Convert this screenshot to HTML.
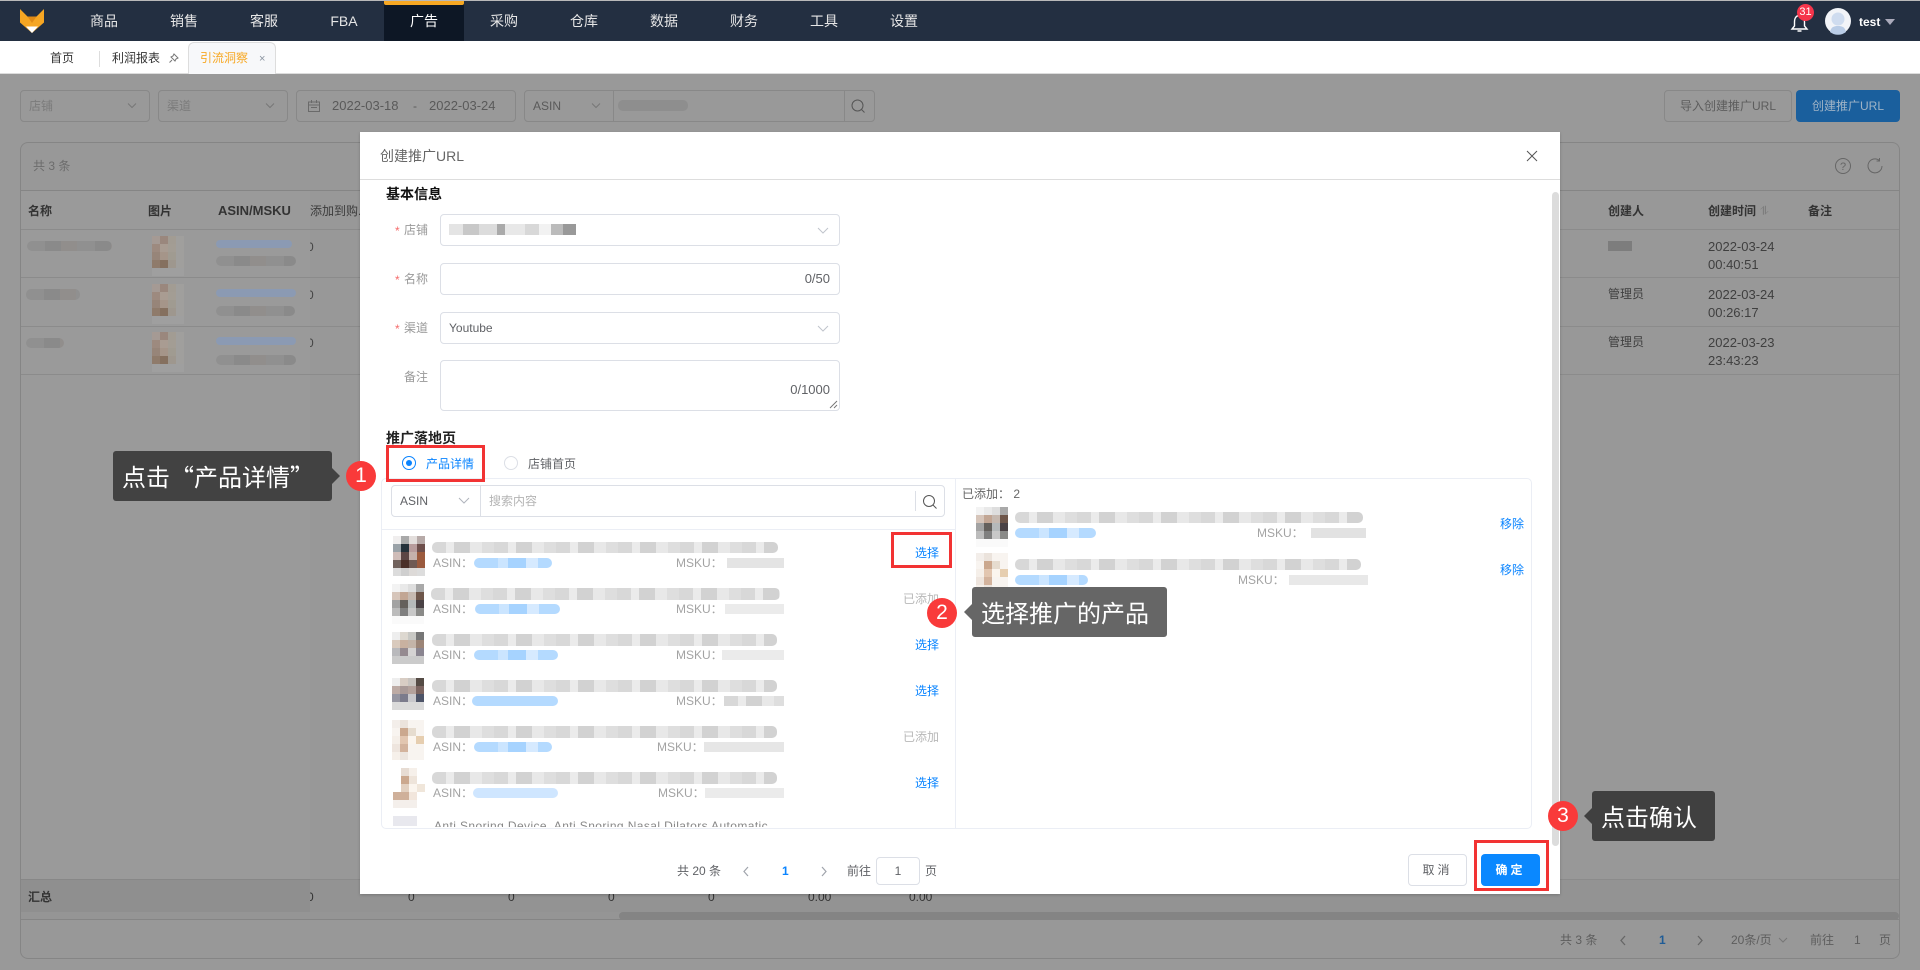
<!DOCTYPE html>
<html lang="zh-CN"><head><meta charset="utf-8"><title>创建推广URL</title>
<style>
*{box-sizing:border-box}
html,body{margin:0;padding:0;width:1920px;height:970px;overflow:hidden;background:#999;font:12px/16px "Liberation Sans","Noto Sans CJK SC",sans-serif;color:#666}
.a{position:absolute}
.t{position:absolute;white-space:nowrap;line-height:16px}
.b{font-weight:700}
.d{font-size:13px}
.nav{left:0;top:0;width:1920px;height:41px;background:#232f41;border-top:1px solid #b9b9b9}
.ni{position:absolute;top:13px;width:80px;text-align:center;font-size:14px;line-height:16px;color:#e6e6e6}
.bx{position:absolute;border:1px solid #888;border-radius:4px}
.in{position:absolute;border:1px solid #dcdfe6;border-radius:4px;background:#fff}
.red{position:absolute;border:3px solid #f23333;z-index:5}
.bl{position:absolute;height:11px;border-radius:5px;background:repeating-linear-gradient(90deg,#d8d8d8 0 14px,#ebebeb 14px 22px,#d2d2d2 22px 38px,#e8e8e8 38px 50px,#dedede 50px 62px)}
.bb{position:absolute;height:10px;border-radius:5px;background:repeating-linear-gradient(90deg,#b4daff 0 24px,#cbe5ff 24px 34px,#a6d3ff 34px 52px,#d6eaff 52px 64px)}
.dk{position:absolute;height:10px;border-radius:5px;background:repeating-linear-gradient(90deg,#909090 0 18px,#8a8a8a 18px 34px,#918e8c 34px 50px)}
.tip{position:absolute;border-radius:3px;color:#fff;font-family:"Noto Sans CJK SC","Liberation Sans",sans-serif;font-size:24px;line-height:50px;height:50px;white-space:nowrap;z-index:6}
.arrow{position:absolute;width:0;height:0;border:8px solid transparent;z-index:6}
.num{position:absolute;width:30px;height:30px;border-radius:50%;background:#f93a3a;color:#fff;text-align:center;font-size:21px;line-height:30px;z-index:7}
.blue{color:#0a84ff}.lab{color:#999}.as{color:#a3a3a3}
.star{color:#f56c6c}
.hd{color:#333;font-weight:700}
.z{position:absolute;left:310px;width:6px;height:16px;overflow:hidden;line-height:16px;text-indent:-3px}
svg{position:absolute;overflow:visible}
</style></head><body>
<svg width="0" height="0" style="left:0;top:0"><defs>
<symbol id="m1" viewBox="0 0 32 40" shape-rendering="crispEdges"><rect width="8" height="8" fill="#f0eeee"/><rect x="8" width="8" height="8" fill="#a9a9a9"/><rect x="16" width="8" height="8" fill="#e3dedc"/><rect x="24" width="8" height="8" fill="#b7aaa8"/><rect y="8" width="8" height="8" fill="#9aa2a8"/><rect x="8" y="8" width="8" height="8" fill="#25313a"/><rect x="16" y="8" width="8" height="8" fill="#b89c9c"/><rect x="24" y="8" width="8" height="8" fill="#6e4f4c"/><rect y="16" width="8" height="8" fill="#cfbcb8"/><rect x="8" y="16" width="8" height="8" fill="#5c4544"/><rect x="16" y="16" width="8" height="8" fill="#c5b1ab"/><rect x="24" y="16" width="8" height="8" fill="#9c5b3e"/><rect y="24" width="8" height="8" fill="#71625d"/><rect x="8" y="24" width="8" height="8" fill="#4a3029"/><rect x="16" y="24" width="8" height="8" fill="#6f5a54"/><rect x="24" y="24" width="8" height="8" fill="#9a5a3e"/><rect y="32" width="8" height="8" fill="#dcdcdc"/><rect x="8" y="32" width="8" height="8" fill="#cfcfcf"/><rect x="16" y="32" width="8" height="8" fill="#dddad8"/><rect x="24" y="32" width="8" height="8" fill="#ddd"/></symbol>
<symbol id="m2" viewBox="0 0 32 40" shape-rendering="crispEdges"><rect width="8" height="8" fill="#f3f3f3"/><rect x="8" width="8" height="8" fill="#e9e9e9"/><rect x="16" width="8" height="8" fill="#dedede"/><rect x="24" width="8" height="8" fill="#a9a9a9"/><rect y="8" width="8" height="8" fill="#d6c5ba"/><rect x="8" y="8" width="8" height="8" fill="#c2a694"/><rect x="16" y="8" width="8" height="8" fill="#c6b9b0"/><rect x="24" y="8" width="8" height="8" fill="#6e564a"/><rect y="16" width="8" height="8" fill="#a3a3a3"/><rect x="8" y="16" width="8" height="8" fill="#64605c"/><rect x="16" y="16" width="8" height="8" fill="#b5b9ba"/><rect x="24" y="16" width="8" height="8" fill="#4a4245"/><rect y="24" width="8" height="8" fill="#bcbcbc"/><rect x="8" y="24" width="8" height="8" fill="#7f7f7f"/><rect x="16" y="24" width="8" height="8" fill="#c8c8c8"/><rect x="24" y="24" width="8" height="8" fill="#8a8a88"/><rect y="32" width="32" height="8" fill="#fafafa"/></symbol>
<symbol id="m3" viewBox="0 0 32 40" shape-rendering="crispEdges"><rect width="8" height="8" fill="#eee"/><rect x="8" width="8" height="8" fill="#ddd8d0"/><rect x="16" width="8" height="8" fill="#c8c8c4"/><rect x="24" width="8" height="8" fill="#777"/><rect y="8" width="8" height="8" fill="#d9cabd"/><rect x="8" y="8" width="8" height="8" fill="#c9b1a0"/><rect x="16" y="8" width="8" height="8" fill="#c4b4a8"/><rect x="24" y="8" width="8" height="8" fill="#9c8577"/><rect y="16" width="8" height="8" fill="#b9b9bc"/><rect x="8" y="16" width="8" height="8" fill="#958a90"/><rect x="16" y="16" width="8" height="8" fill="#d5d3d3"/><rect x="24" y="16" width="8" height="8" fill="#8a8590"/><rect y="24" width="32" height="8" fill="#cbcbcb"/><rect y="32" width="32" height="8" fill="#fff"/></symbol>
<symbol id="m4" viewBox="0 0 32 40" shape-rendering="crispEdges"><rect width="8" height="8" fill="#eee"/><rect x="8" width="8" height="8" fill="#d8cdc4"/><rect x="16" width="8" height="8" fill="#c8c4c0"/><rect x="24" width="8" height="8" fill="#554b45"/><rect y="8" width="8" height="8" fill="#bdaba5"/><rect x="8" y="8" width="8" height="8" fill="#a89997"/><rect x="16" y="8" width="8" height="8" fill="#b4a29c"/><rect x="24" y="8" width="8" height="8" fill="#7b6460"/><rect y="16" width="8" height="8" fill="#9696a2"/><rect x="8" y="16" width="8" height="8" fill="#7b7b8c"/><rect x="16" y="16" width="8" height="8" fill="#c8c8cc"/><rect x="24" y="16" width="8" height="8" fill="#4d5468"/><rect y="24" width="32" height="8" fill="#dadada"/><rect y="32" width="32" height="8" fill="#fff"/></symbol>
<symbol id="m5" viewBox="0 0 32 40" shape-rendering="crispEdges"><rect width="32" height="40" fill="#f8f4f0"/><rect width="8" height="8" fill="#f3eeea"/><rect x="8" width="8" height="8" fill="#ebe3dc"/><rect x="8" y="8" width="8" height="8" fill="#cba88e"/><rect x="16" y="8" width="8" height="8" fill="#e6dccf"/><rect y="16" width="8" height="8" fill="#f5efe9"/><rect x="8" y="16" width="8" height="8" fill="#e2c6b0"/><rect x="16" y="16" width="8" height="8" fill="#fbf5ee"/><rect x="24" y="16" width="8" height="8" fill="#e6ceb0"/><rect y="24" width="8" height="8" fill="#eee5de"/><rect x="8" y="24" width="8" height="8" fill="#d3b39d"/><rect y="32" width="8" height="8" fill="#f6f0ea"/><rect x="8" y="32" width="8" height="8" fill="#ece5df"/></symbol>
<symbol id="m6" viewBox="0 0 32 40" shape-rendering="crispEdges"><rect x="8" width="8" height="8" fill="#e7dcd3"/><rect x="16" width="8" height="8" fill="#f6f0ea"/><rect x="8" y="8" width="8" height="8" fill="#cba88e"/><rect x="16" y="8" width="8" height="8" fill="#eee4da"/><rect x="8" y="16" width="8" height="8" fill="#e2d0c0"/><rect x="16" y="16" width="8" height="8" fill="#fbf5ee"/><rect x="24" y="16" width="8" height="8" fill="#f0e6da"/><rect y="24" width="16" height="8" fill="#cfb09a"/><rect x="16" y="24" width="8" height="8" fill="#f2e6dc"/><rect y="32" width="24" height="8" fill="#f4efeb"/></symbol>
<symbol id="m7" viewBox="0 0 32 40" shape-rendering="crispEdges"><rect width="32" height="40" fill="#a09f9d"/><rect width="8" height="8" fill="#a59a94"/><rect x="8" width="8" height="8" fill="#9a877d"/><rect x="16" width="8" height="8" fill="#a29c93"/><rect y="8" width="8" height="8" fill="#9d8a7f"/><rect x="8" y="8" width="8" height="8" fill="#a99c92"/><rect x="16" y="8" width="8" height="8" fill="#a39d94"/><rect y="16" width="8" height="8" fill="#978579"/><rect x="8" y="16" width="8" height="8" fill="#a59589"/><rect x="16" y="16" width="8" height="8" fill="#a09b91"/><rect y="24" width="8" height="8" fill="#8f7b6b"/><rect x="8" y="24" width="8" height="8" fill="#85705f"/><rect x="16" y="24" width="8" height="8" fill="#9e978e"/><rect y="32" width="32" height="8" fill="#9f9f9f"/></symbol>
</defs></svg>

<!-- background page -->
<div class="a" style="left:0;top:73px;width:1920px;height:897px;background:#999"></div>
<div class="bx" style="left:20px;top:90px;width:130px;height:32px"></div><div class="t" style="left:29px;top:98px;color:#7b7b7b">店铺</div>
<svg style="left:127px;top:102px" width="10" height="8"><path d="M1 1.5l4 4 4-4" fill="none" stroke="#777"/></svg>
<div class="bx" style="left:158px;top:90px;width:130px;height:32px"></div><div class="t" style="left:167px;top:98px;color:#7b7b7b">渠道</div>
<svg style="left:265px;top:102px" width="10" height="8"><path d="M1 1.5l4 4 4-4" fill="none" stroke="#777"/></svg>
<div class="bx" style="left:296px;top:90px;width:220px;height:32px"></div>
<svg style="left:308px;top:100px" width="12" height="12"><path d="M.5 2h11v9.5H.5zM.5 5h11M3.5 0v3M8.5 0v3M3 7.500h6" fill="none" stroke="#6a6a6a"/></svg>
<div class="t d" style="left:332px;top:98px;color:#5a5a5a">2022-03-18</div><div class="t" style="left:413px;top:98px;color:#5a5a5a">-</div><div class="t d" style="left:429px;top:98px;color:#5a5a5a">2022-03-24</div>
<div class="bx" style="left:524px;top:90px;width:351px;height:32px"></div>
<div class="a" style="left:613px;top:90px;width:1px;height:32px;background:#888"></div><div class="a" style="left:844px;top:90px;width:1px;height:32px;background:#888"></div>
<div class="t" style="left:533px;top:98px;color:#5a5a5a">ASIN</div>
<svg style="left:591px;top:102px" width="10" height="8"><path d="M1 1.5l4 4 4-4" fill="none" stroke="#777"/></svg>
<div class="dk" style="left:618px;top:100px;width:70px;height:11px;background:#8e8e8e"></div>
<svg style="left:851px;top:99px" width="15" height="15"><circle cx="6.5" cy="6.5" r="5.5" fill="none" stroke="#555"/><path d="M10.5 10.5l3 3" stroke="#555"/></svg>
<div class="bx" style="left:1664px;top:90px;width:128px;height:32px"></div><div class="t" style="left:1680px;top:98px;color:#5d5d5d">导入创建推广URL</div>
<div class="a" style="left:1796px;top:90px;width:104px;height:32px;background:#1a5f9d;border-radius:4px"></div><div class="t" style="left:1812px;top:98px;color:#9fb3c6">创建推广URL</div>

<div class="bx" style="left:20px;top:142px;width:1880px;height:817px;border-radius:8px;background:#989898;border-color:#858585"></div>
<div class="t" style="left:33px;top:158px;color:#6c6c6c">共 3 条</div>
<svg style="left:1835px;top:158px" width="16" height="16"><circle cx="8" cy="8" r="7.500" fill="none" stroke="#666"/><text x="8" y="12" font-size="11" text-anchor="middle" fill="#666" font-family="Liberation Sans">?</text></svg>
<svg style="left:1867px;top:158px" width="16" height="16"><path d="M12.500 2.500A7 7 0 1 0 15 8M12.500 0v3h-3" fill="none" stroke="#666"/></svg>
<div class="a" style="left:21px;top:190px;width:1878px;height:1px;background:#858585"></div>
<div class="a" style="left:21px;top:229px;width:1878px;height:1px;background:#8b8b8b"></div>
<div class="a" style="left:21px;top:277px;width:1878px;height:1px;background:#8b8b8b"></div>
<div class="a" style="left:21px;top:326px;width:1878px;height:1px;background:#8b8b8b"></div>
<div class="a" style="left:21px;top:374px;width:1878px;height:1px;background:#8b8b8b"></div>
<div class="a" style="left:21px;top:191px;width:289px;height:721px;background:#9a9a9a"></div>
<div class="a" style="left:21px;top:229px;width:289px;height:1px;background:#8b8b8b"></div>
<div class="a" style="left:21px;top:277px;width:289px;height:1px;background:#8b8b8b"></div>
<div class="a" style="left:21px;top:326px;width:289px;height:1px;background:#8b8b8b"></div>
<div class="a" style="left:21px;top:374px;width:289px;height:1px;background:#8b8b8b"></div>
<div class="t hd" style="left:28px;top:203px">名称</div><div class="t hd" style="left:148px;top:203px">图片</div><div class="t hd d" style="left:218px;top:203px">ASIN/MSKU</div><div class="t" style="left:310px;top:203px;color:#3c3c3c">添加到购...</div>
<div class="t hd" style="left:1608px;top:203px">创建人</div><div class="t hd" style="left:1708px;top:203px">创建时间</div><div class="t" style="left:1760px;top:203px;color:#7b7b7b">⥮</div><div class="t hd" style="left:1808px;top:203px">备注</div>
<div class="dk" style="left:27px;top:241px;width:85px"></div><div class="dk" style="left:26px;top:289px;width:54px;height:11px"></div><div class="dk" style="left:26px;top:338px;width:38px"></div>
<svg style="left:152px;top:236px" width="32" height="40"><use href="#m7"/></svg><svg style="left:152px;top:284px" width="32" height="40"><use href="#m7"/></svg><svg style="left:152px;top:332px" width="32" height="40"><use href="#m7"/></svg>
<div class="a" style="left:216px;top:240px;width:76px;height:8px;border-radius:4px;background:#8b9ab3"></div><div class="dk" style="left:216px;top:256px;width:80px"></div>
<div class="a" style="left:216px;top:289px;width:80px;height:8px;border-radius:4px;background:#8b9ab3"></div><div class="dk" style="left:216px;top:306px;width:79px"></div>
<div class="a" style="left:216px;top:337px;width:80px;height:8px;border-radius:4px;background:#8b9ab3"></div><div class="dk" style="left:216px;top:355px;width:80px"></div>
<div class="z" style="top:239px;color:#444">0</div><div class="z" style="top:287px;color:#444">0</div><div class="z" style="top:335px;color:#444">0</div>
<div class="a" style="left:1608px;top:241px;width:24px;height:10px;background:#7d7d7d"></div>
<div class="t" style="left:1608px;top:286px;color:#3f3f3f">管理员</div><div class="t" style="left:1608px;top:334px;color:#3f3f3f">管理员</div>
<div class="t d" style="left:1708px;top:239px;color:#3f3f3f">2022-03-24</div><div class="t d" style="left:1708px;top:257px;color:#3f3f3f">00:40:51</div>
<div class="t d" style="left:1708px;top:287px;color:#3f3f3f">2022-03-24</div><div class="t d" style="left:1708px;top:305px;color:#3f3f3f">00:26:17</div>
<div class="t d" style="left:1708px;top:335px;color:#3f3f3f">2022-03-23</div><div class="t d" style="left:1708px;top:353px;color:#3f3f3f">23:43:23</div>
<!-- summary -->
<div class="a" style="left:21px;top:879px;width:1878px;height:33px;background:#939393;border-top:1px solid #8b8b8b"></div>
<div class="a" style="left:21px;top:879px;width:289px;height:33px;background:#8f8f8f;border-top:1px solid #878787"></div>
<div class="a" style="left:21px;top:912px;width:1878px;height:8px;background:#959595;border-bottom:1px solid #858585"></div>
<div class="a" style="left:619px;top:912px;width:1280px;height:8px;background:#848484;border-radius:4px"></div>
<div class="t" style="left:28px;top:889px;color:#333;font-weight:700">汇总</div>
<div class="z" style="top:889px;color:#333">0</div><div class="t" style="left:408px;top:889px;color:#333">0</div><div class="t" style="left:508px;top:889px;color:#333">0</div><div class="t" style="left:608px;top:889px;color:#333">0</div><div class="t" style="left:708px;top:889px;color:#333">0</div><div class="t" style="left:808px;top:889px;color:#333">0.00</div><div class="t" style="left:909px;top:889px;color:#333">0.00</div>
<!-- page pagination -->
<div class="t" style="left:1560px;top:932px;color:#5e5e5e">共 3 条</div>
<svg style="left:1619px;top:935px" width="8" height="11"><path d="M6 1L2 5.500l4 4.500" fill="none" stroke="#666" stroke-width="1.300"/></svg>
<div class="t b" style="left:1659px;top:932px;color:#1f5c96">1</div>
<svg style="left:1696px;top:935px" width="8" height="11"><path d="M2 1l4 4.500L2 10" fill="none" stroke="#666" stroke-width="1.300"/></svg>
<div class="t" style="left:1731px;top:932px;color:#5e5e5e">20条/页</div>
<svg style="left:1778px;top:937px" width="10" height="7"><path d="M1 1l4 4 4-4" fill="none" stroke="#777"/></svg>
<div class="t" style="left:1810px;top:932px;color:#5e5e5e">前往</div><div class="t" style="left:1854px;top:932px;color:#5e5e5e">1</div><div class="t" style="left:1879px;top:932px;color:#5e5e5e">页</div>

<!-- top nav -->
<div class="a nav"></div>
<svg style="left:20px;top:9px" width="24" height="24"><path d="M0 0l7.500 7.500h9L24 0v13.500L12 24 0 13.500z" fill="#f6a623"/><path d="M6 17.500h12L12 24z" fill="#fff"/><path d="M7.500 7.500h9L12 14z" fill="#e08a15"/></svg>
<div class="a" style="left:384px;top:1px;width:80px;height:40px;background:#0d1725"></div><div class="a" style="left:384px;top:1px;width:80px;height:4px;background:#f7a823;border-radius:0 0 2px 2px"></div>
<div class="ni" style="left:64px">商品</div><div class="ni" style="left:144px">销售</div><div class="ni" style="left:224px">客服</div><div class="ni" style="left:304px">FBA</div><div class="ni" style="left:384px;color:#fff">广告</div><div class="ni" style="left:464px">采购</div><div class="ni" style="left:544px">仓库</div><div class="ni" style="left:624px">数据</div><div class="ni" style="left:704px">财务</div><div class="ni" style="left:784px">工具</div><div class="ni" style="left:864px">设置</div>
<svg style="left:1791px;top:14px" width="17" height="19"><path d="M8.500 1.500C5 1.500 3.500 4.500 3.500 8v4L1 15h15l-2.500-3V8c0-3.500-1.500-6.500-5-6.500zM6.500 17h4" fill="none" stroke="#fff" stroke-width="1.400"/></svg>
<div class="a" style="left:1797px;top:4px;width:17px;height:17px;border-radius:50%;background:#f5354b;color:#fff;font-size:11px;line-height:17px;text-align:center">31</div>
<svg style="left:1825px;top:8px" width="26" height="26"><circle cx="13" cy="13" r="13" fill="#f2f4f8"/><circle cx="13" cy="11" r="6.500" fill="#cfdcef"/><path d="M5 24c1-5 4-6 8-6s7 1 8 6a13 13 0 0 1-16 0z" fill="#b9cce6"/></svg>
<div class="t b" style="left:1859px;top:14px;color:#fff">test</div>
<div class="a" style="left:1885px;top:19px;width:0;height:0;border:5px solid transparent;border-top:6px solid #aab;border-bottom:0"></div>

<!-- tabs -->
<div class="a" style="left:0;top:41px;width:1920px;height:33px;background:#fff;border-bottom:1px solid #dcdcdc"></div>
<div class="t" style="left:50px;top:50px;color:#333">首页</div>
<div class="a" style="left:99px;top:51px;width:1px;height:16px;background:#ddd"></div>
<div class="t" style="left:112px;top:50px;color:#333">利润报表</div>
<svg style="left:169px;top:53px" width="10" height="11"><path d="M5 1l4 4-2 1-1 2-4-4 2-1zM3 7L.500 9.500" fill="none" stroke="#777"/></svg>
<div class="a" style="left:188px;top:42px;width:88px;height:32px;background:#f7f8fa;border:1px solid #ddd;border-bottom:0;border-radius:6px 6px 0 0"></div>
<div class="t" style="left:200px;top:50px;color:#f7a823">引流洞察</div>
<div class="t" style="left:259px;top:51px;color:#8a93a0;font-size:11px">×</div>

<!-- modal -->
<div class="a" style="left:360px;top:132px;width:1200px;height:762px;background:#fff;box-shadow:0 1px 3px rgba(0,0,0,.2)"></div>
<div class="t" style="left:380px;top:148px;font-size:14px;color:#666">创建推广URL</div>
<svg style="left:1527px;top:151px" width="10" height="10"><path d="M0 0l10 10M10 0L0 10" stroke="#555" fill="none"/></svg>
<div class="a" style="left:360px;top:179px;width:1200px;height:1px;background:#ddd"></div>
<div class="a" style="left:1552px;top:192px;width:7px;height:654px;background:#dcdcdc;border-radius:4px"></div>

<div class="t b" style="left:386px;top:186px;font-size:14px;color:#111">基本信息</div>
<div class="t star" style="left:395px;top:223px">*</div><div class="t lab" style="left:404px;top:222px">店铺</div>
<div class="in" style="left:440px;top:214px;width:400px;height:32px"></div>
<div class="a" style="left:449px;top:224px;width:127px;height:11px;background:repeating-linear-gradient(90deg,#e4e4e4 0 14px,#c8c8c8 14px 30px,#dcdcdc 30px 48px,#aaa 48px 56px,#e8e8e8 56px 76px,#d8d8d8 76px 90px,#f2f2f2 90px 102px,#bbb 102px 114px,#999 114px 127px)"></div>
<svg style="left:817px;top:227px" width="12" height="8"><path d="M1 1l5 5 5-5" fill="none" stroke="#c0c4cc"/></svg>
<div class="t star" style="left:395px;top:272px">*</div><div class="t lab" style="left:404px;top:271px">名称</div>
<div class="in" style="left:440px;top:263px;width:400px;height:32px"></div><div class="t d" style="right:1090px;top:271px;color:#606266">0/50</div>
<div class="t star" style="left:395px;top:321px">*</div><div class="t lab" style="left:404px;top:320px">渠道</div>
<div class="in" style="left:440px;top:312px;width:400px;height:32px"></div><div class="t" style="left:449px;top:320px;color:#606266">Youtube</div>
<svg style="left:817px;top:325px" width="12" height="8"><path d="M1 1l5 5 5-5" fill="none" stroke="#c0c4cc"/></svg>
<div class="t lab" style="left:404px;top:369px">备注</div>
<div class="in" style="left:440px;top:360px;width:400px;height:51px"></div><div class="t d" style="right:1090px;top:382px;color:#606266">0/1000</div>
<svg style="left:829px;top:400px" width="10" height="10"><path d="M1 8l7-7M5 8l3-3" stroke="#777" fill="none"/></svg>

<div class="t b" style="left:386px;top:430px;font-size:14px;color:#222">推广落地页</div>
<svg style="left:401px;top:455px" width="16" height="16"><circle cx="8" cy="8" r="6.500" fill="#fff" stroke="#0a84ff"/><circle cx="8" cy="8" r="3" fill="#0a84ff"/></svg>
<div class="t blue" style="left:426px;top:456px">产品详情</div>
<svg style="left:503px;top:455px" width="16" height="16"><circle cx="8" cy="8" r="6.500" fill="#fff" stroke="#dcdfe6"/></svg>
<div class="t" style="left:528px;top:456px;color:#606266">店铺首页</div>
<div class="red" style="left:386px;top:445px;width:99px;height:37px"></div>

<div class="a" style="left:381px;top:478px;width:1151px;height:351px;border:1px solid #ebeef5;border-radius:5px"></div>
<div class="a" style="left:955px;top:479px;width:1px;height:349px;background:#ebeef5"></div>
<div class="a" style="left:382px;top:529px;width:573px;height:1px;background:#ebeef5"></div>
<div class="in" style="left:391px;top:485px;width:554px;height:32px"></div>
<div class="a" style="left:480px;top:485px;width:1px;height:32px;background:#dcdfe6"></div><div class="a" style="left:915px;top:491px;width:1px;height:20px;background:#dcdfe6"></div>
<div class="t" style="left:400px;top:493px;color:#606266">ASIN</div>
<svg style="left:458px;top:497px" width="12" height="8"><path d="M1 1l5 5 5-5" fill="none" stroke="#b0b4bc"/></svg>
<div class="t" style="left:489px;top:493px;color:#b4b4b4">搜索内容</div>
<svg style="left:922px;top:494px" width="16" height="16"><circle cx="7" cy="7" r="5.500" fill="none" stroke="#555"/><path d="M11 11l3.500 3.500" stroke="#555"/></svg>

<!-- left list -->
<svg style="left:393px;top:536px" width="32" height="40"><use href="#m1"/></svg>
<div class="bl" style="left:432px;top:542px;width:346px"></div><div class="t as" style="left:433px;top:555px">ASIN：</div><div class="bb" style="left:474px;top:558px;width:78px"></div><div class="t as" style="left:676px;top:555px">MSKU：</div><div class="bl" style="left:727px;top:558px;width:57px;height:10px;background:#e4e4e4;border-radius:0"></div><div class="t blue" style="left:915px;top:545px">选择</div>
<svg style="left:392px;top:584px" width="32" height="40"><use href="#m2"/></svg>
<div class="bl" style="left:431px;top:588px;width:349px;height:12px"></div><div class="t as" style="left:433px;top:601px">ASIN：</div><div class="bb" style="left:475px;top:604px;width:85px"></div><div class="t as" style="left:676px;top:601px">MSKU：</div><div class="bl" style="left:725px;top:604px;width:59px;height:10px;background:#ebebeb;border-radius:0"></div><div class="t" style="left:903px;top:591px;color:#b8b8b8">已添加</div>
<svg style="left:392px;top:632px" width="32" height="40"><use href="#m3"/></svg>
<div class="bl" style="left:432px;top:634px;width:345px;height:12px"></div><div class="t as" style="left:433px;top:647px">ASIN：</div><div class="bb" style="left:474px;top:650px;width:84px"></div><div class="t as" style="left:676px;top:647px">MSKU：</div><div class="bl" style="left:722px;top:650px;width:62px;height:10px;background:#ebebeb;border-radius:0"></div><div class="t blue" style="left:915px;top:637px">选择</div>
<svg style="left:392px;top:678px" width="32" height="40"><use href="#m4"/></svg>
<div class="bl" style="left:432px;top:680px;width:345px;height:12px"></div><div class="t as" style="left:433px;top:693px">ASIN：</div><div class="bb" style="left:472px;top:696px;width:86px;background:#b4daff"></div><div class="t as" style="left:676px;top:693px">MSKU：</div><div class="bl" style="left:724px;top:696px;width:60px;height:10px;border-radius:0"></div><div class="t blue" style="left:915px;top:683px">选择</div>
<svg style="left:392px;top:720px" width="32" height="40"><use href="#m5"/></svg>
<div class="bl" style="left:432px;top:726px;width:345px;height:12px"></div><div class="t as" style="left:433px;top:739px">ASIN：</div><div class="bb" style="left:474px;top:742px;width:78px"></div><div class="t as" style="left:657px;top:739px">MSKU：</div><div class="bl" style="left:704px;top:742px;width:80px;height:10px;background:#e6e6e6;border-radius:0"></div><div class="t" style="left:903px;top:729px;color:#b8b8b8">已添加</div>
<svg style="left:393px;top:768px" width="32" height="40"><use href="#m6"/></svg>
<div class="bl" style="left:432px;top:772px;width:345px;height:12px"></div><div class="t as" style="left:433px;top:785px">ASIN：</div><div class="bb" style="left:473px;top:788px;width:85px;background:#cfe6ff"></div><div class="t as" style="left:658px;top:785px">MSKU：</div><div class="bl" style="left:705px;top:788px;width:79px;height:10px;background:#ebebeb;border-radius:0"></div><div class="t blue" style="left:915px;top:775px">选择</div>
<div class="a" style="left:393px;top:816px;width:24px;height:10px;background:#e8e8ee"></div>
<div class="a" style="left:434px;top:819px;width:345px;height:8px;overflow:hidden;color:#888;line-height:14px;letter-spacing:.4px;white-space:nowrap">Anti Snoring Device, Anti Snoring Nasal Dilators Automatic</div>
<div class="red" style="left:891px;top:532px;width:61px;height:36px"></div>

<!-- right list -->
<div class="t" style="left:962px;top:486px;color:#666">已添加： 2</div>
<svg style="left:976px;top:507px" width="32" height="40"><use href="#m2"/></svg>
<div class="bl" style="left:1015px;top:512px;width:348px"></div><div class="bb" style="left:1015px;top:528px;width:81px"></div><div class="t as" style="left:1257px;top:525px">MSKU：</div><div class="bl" style="left:1311px;top:528px;width:55px;height:10px;background:#e2e2e2;border-radius:0"></div><div class="t blue" style="left:1500px;top:516px">移除</div>
<svg style="left:976px;top:553px" width="32" height="40"><use href="#m5"/></svg>
<div class="bl" style="left:1015px;top:559px;width:346px"></div><div class="bb" style="left:1015px;top:575px;width:73px"></div><div class="t as" style="left:1238px;top:572px">MSKU：</div><div class="bl" style="left:1289px;top:575px;width:79px;height:10px;background:#e8e8e8;border-radius:0"></div><div class="t blue" style="left:1500px;top:562px">移除</div>

<!-- modal pagination -->
<div class="t" style="left:677px;top:863px;color:#606266">共 20 条</div>
<svg style="left:742px;top:866px" width="8" height="11"><path d="M6 1L2 5.500l4 4.500" fill="none" stroke="#a0a4ac" stroke-width="1.200"/></svg>
<div class="t b blue" style="left:782px;top:863px">1</div>
<svg style="left:820px;top:866px" width="8" height="11"><path d="M2 1l4 4.500L2 10" fill="none" stroke="#a0a4ac" stroke-width="1.200"/></svg>
<div class="t" style="left:847px;top:863px;color:#606266">前往</div>
<div class="in" style="left:876px;top:857px;width:44px;height:28px;text-align:center;line-height:26px;color:#606266">1</div>
<div class="t" style="left:925px;top:863px;color:#606266">页</div>
<div class="in" style="left:1408px;top:854px;width:59px;height:32px;text-align:center;line-height:30px;color:#606266;letter-spacing:3px">取消</div>
<div class="a b" style="left:1481px;top:854px;width:59px;height:32px;background:#0a88ff;border-radius:4px;color:#fff;text-align:center;line-height:32px;letter-spacing:3px">确定</div>
<div class="red" style="left:1474px;top:840px;width:75px;height:51px"></div>

<!-- tips -->
<div class="tip" style="left:113px;top:451px;width:219px;background:#424242;padding-left:9px">点击“产品详情”</div>
<div class="arrow" style="left:332px;top:468px;border-left-color:#424242;border-right:0"></div>
<div class="num" style="left:346px;top:461px">1</div>
<div class="tip" style="left:972px;top:587px;width:195px;background:#666;padding-left:9px">选择推广的产品</div>
<div class="arrow" style="left:964px;top:604px;border-right-color:#666;border-left:0"></div>
<div class="num" style="left:927px;top:598px">2</div>
<div class="tip" style="left:1592px;top:791px;width:123px;background:#404040;padding-left:9px">点击确认</div>
<div class="arrow" style="left:1584px;top:808px;border-right-color:#404040;border-left:0"></div>
<div class="num" style="left:1548px;top:801px">3</div>
</body></html>
